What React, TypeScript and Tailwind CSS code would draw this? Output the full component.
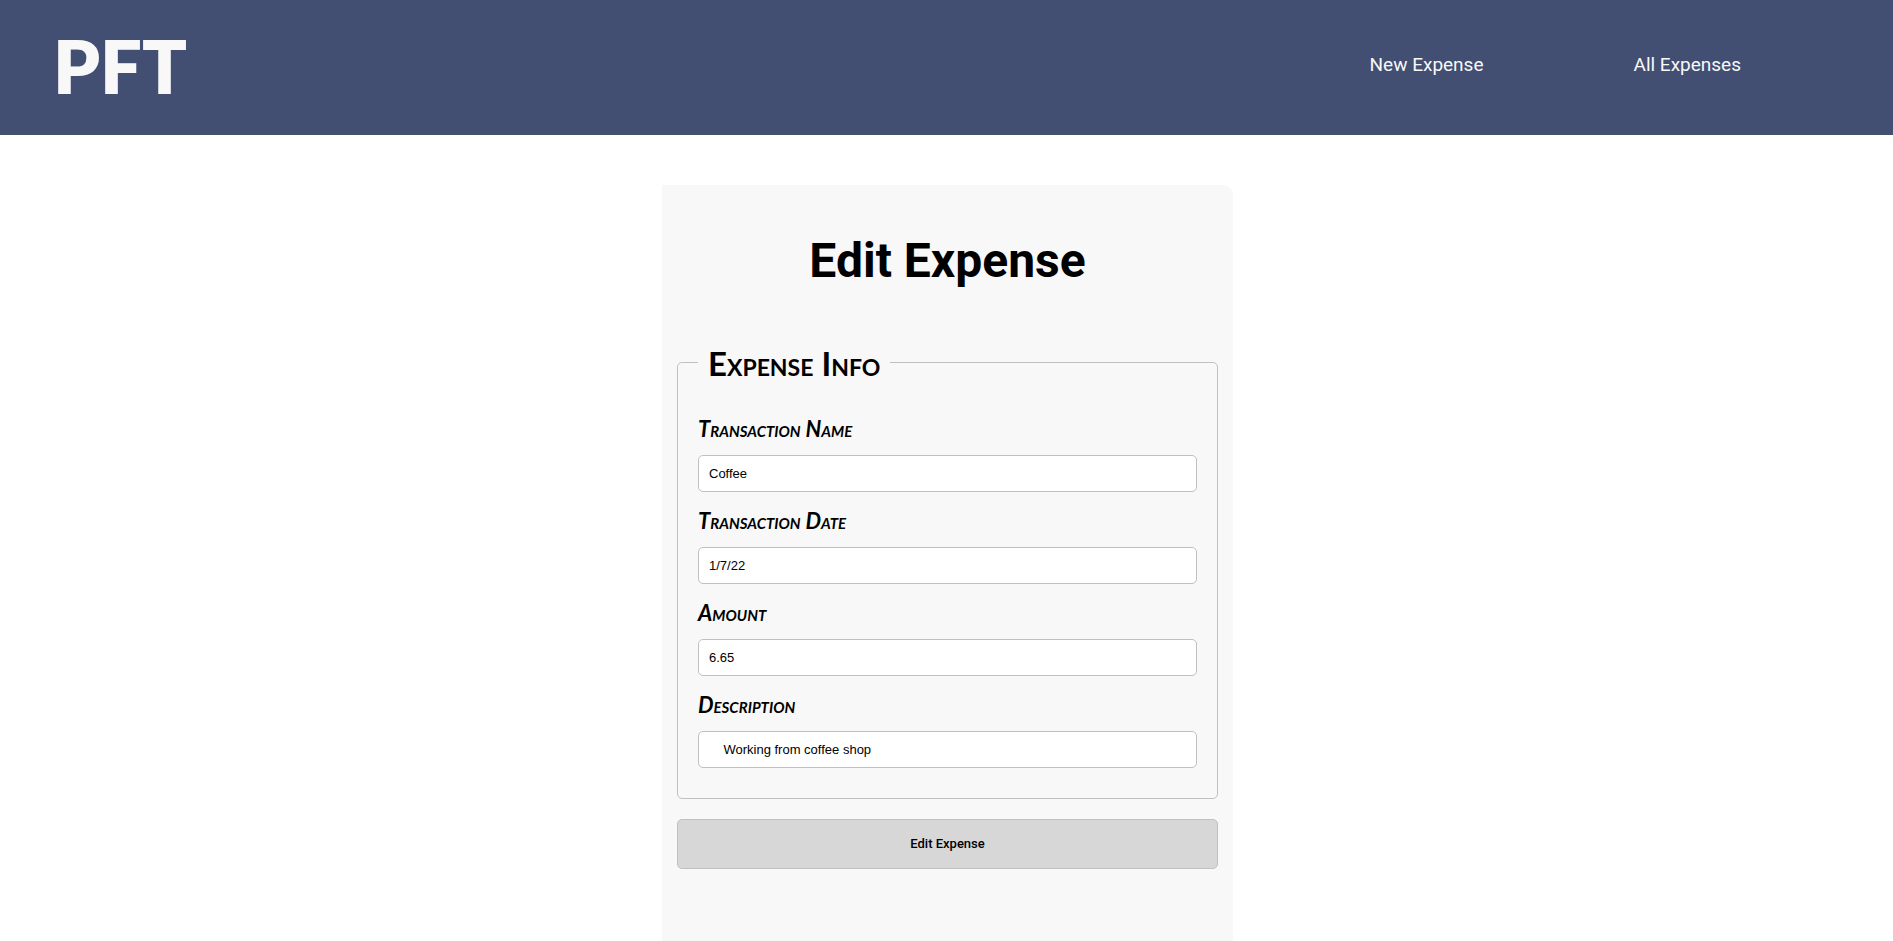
import { useState } from "react";

const fields = [
  { id: "name", label: "Transaction Name", initial: "Coffee" },
  { id: "date", label: "Transaction Date", initial: "1/7/22" },
  { id: "amount", label: "Amount", initial: "6.65" },
  { id: "description", label: "Description", initial: "    Working from coffee shop" },
];

function Field({ id, label, initial }: { id: string; label: string; initial: string }) {
  const [value, setValue] = useState(initial);
  return (
    <div>
      <label
        htmlFor={id}
        className="block pt-[11px] pb-2 font-[Lato,sans-serif] text-[22px] leading-9 font-bold italic [font-variant:small-caps]"
      >
        {label}
      </label>
      <input
        id={id}
        type="text"
        value={value}
        onChange={(e) => setValue(e.target.value)}
        className="block h-[37px] w-full rounded-[5px] border border-[#c0c0c0] bg-white px-2.5 font-['Liberation_Sans',Arial,sans-serif] text-[13px] text-black"
      />
    </div>
  );
}

export default function App() {
  return (
    <div className="flex min-h-screen flex-col bg-white font-[Roboto,sans-serif] text-black">
      <header className="flex h-[135px] items-center justify-between bg-[#424e72] pr-[152px] pb-1 pl-[53px] text-[#f8f8f8]">
        <div className="font-[Lato,sans-serif] text-[74px] leading-none font-extrabold">PFT</div>
        <nav className="flex gap-[150px] text-[19px]">
          <a href="#new">New Expense</a>
          <a href="#all">All Expenses</a>
        </nav>
      </header>
      <main className="flex grow flex-col pt-[50px] pl-0.5">
        <form
          onSubmit={(e) => e.preventDefault()}
          className="mx-auto w-full max-w-[571px] grow rounded-tr-[10px] bg-[#f8f8f8] px-[15px] pt-[46px] pb-[72px]"
        >
          <h1 className="text-center text-[48px] leading-[60px] font-bold">Edit Expense</h1>
          <fieldset className="mt-[47px] rounded-[5px] border border-[#c0c0c0] px-5 pb-[30px]">
            <legend className="px-2.5 pt-0.5 font-[Lato,sans-serif] text-[33px] leading-[46px] font-bold [font-variant:small-caps]">
              Expense Info
            </legend>
            <div className="pt-3.5">
              {fields.map((f) => (
                <Field key={f.id} {...f} />
              ))}
            </div>
          </fieldset>
          <button
            type="submit"
            className="mt-5 block h-[50px] w-full rounded-[5px] border border-[#c0c0c0] bg-[#d7d7d7] text-[13px] font-medium"
          >
            Edit Expense
          </button>
        </form>
      </main>
    </div>
  );
}
